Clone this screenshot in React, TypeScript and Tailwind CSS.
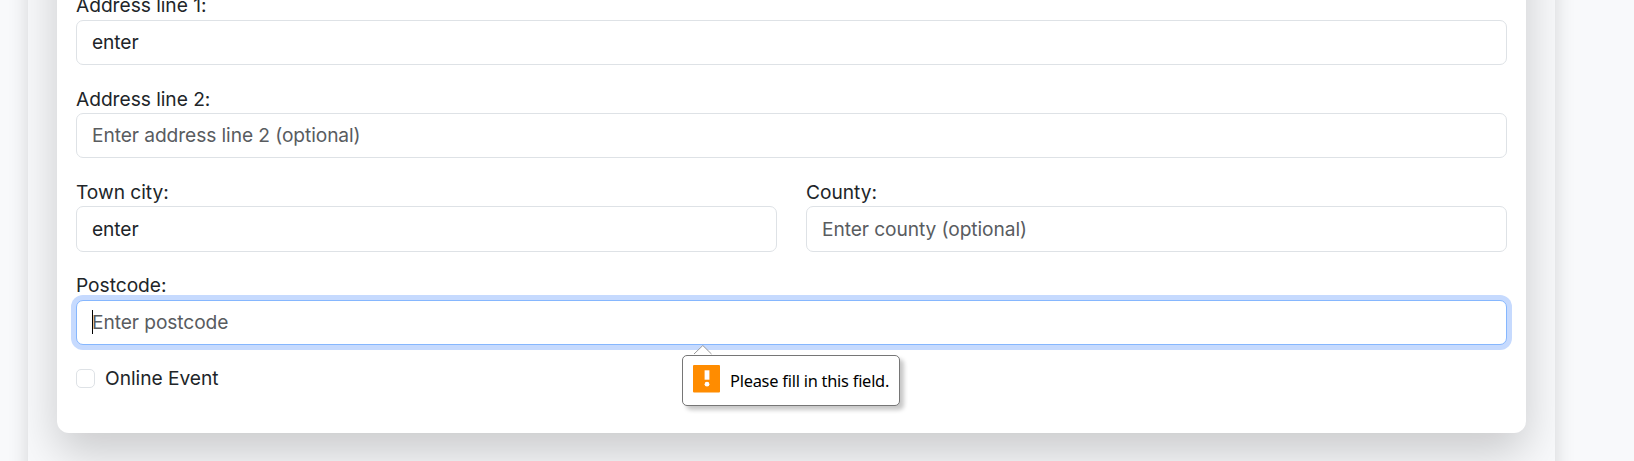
import type { ReactNode } from "react";

const inputBase =
  "block h-[45.2px] w-full rounded-[7px] border bg-white px-[15px] pb-[0.85px] text-[19.2px] leading-[28.8px] tracking-[-0.09px] text-[#212529] outline-none placeholder:text-[#595c5f] placeholder:opacity-100";

type FieldProps = {
  id: string;
  label: string;
  value?: string;
  placeholder?: string;
  focused?: boolean;
  children?: ReactNode;
};

function Field({ id, label, value, placeholder, focused, children }: FieldProps) {
  return (
    <div className="relative mb-[19.2px]">
      <label htmlFor={id} className="block h-[28.8px] pt-[0.15px] leading-[28.8px]">
        {label}
      </label>
      <input
        id={id}
        defaultValue={value}
        placeholder={placeholder}
        className={`${inputBase} ${
          focused
            ? "border-[#86b7fe] shadow-[0_0_0_5px_#c6dafe]"
            : "border-[#dee2e6]"
        }`}
      />
      {children}
    </div>
  );
}

function ValidationBubble() {
  return (
    <div className="absolute left-[606px] top-[84px] z-10 w-[218px]">
      <div className="flex h-[51px] items-start rounded-[5px] border border-[#767676] bg-white pl-[10px] pt-[9px] shadow-[4px_4px_4px_rgba(0,0,0,0.22)]">
        <svg className="h-[28px] w-[27px] shrink-0" viewBox="0 0 27 28">
          <rect width="27" height="27.5" rx="1" fill="#ff8c00" />
          <path d="M11.6 5.3h4.8v9.4h-4.8z" fill="#fff" />
          <circle cx="14" cy="19.2" r="2.4" fill="#fff" />
        </svg>
        <span className="ml-[10px] mt-[4px] whitespace-nowrap font-['Noto_Sans',sans-serif] text-[16.4px] leading-[24px] tracking-[-0.24px] text-black">
          Please fill in this field.
        </span>
      </div>
      <svg className="absolute left-[11px] top-[-10px] h-[10px] w-[20px]" viewBox="0 0 20 10">
        <path d="M1 9 9.8.5 18.5 9v1H1z" fill="#fff" />
        <path d="M1 9 9.8.5 18.5 9" fill="none" stroke="#999" />
      </svg>
    </div>
  );
}

export default function App() {
  return (
    <div className="h-[461px] overflow-hidden bg-[#f8f9fb] pl-[28px] pr-[79px] font-['Inter',sans-serif] text-[19.2px] leading-[28.8px] tracking-[-0.04px] text-[#212529]">
      <div className="-mt-[100px] h-[700px] overflow-hidden bg-[#f8f9fb] px-[29px] shadow-[0_9.6px_19.2px_rgba(0,0,0,0.15)]">
        <div className="-mt-[100px] h-[633px] rounded-[12px] bg-white px-[19px] pt-[191.3px] shadow-[0_19.2px_45px_rgba(0,0,0,0.19)]">
          <Field id="line1" label="Address line 1:" value="enter" />
          <Field id="line2" label="Address line 2:" placeholder="Enter address line 2 (optional)" />
          <div className="grid grid-cols-2 gap-[29px]">
            <Field id="town" label="Town city:" value="enter" />
            <Field id="county" label="County:" placeholder="Enter county (optional)" />
          </div>
          <Field id="postcode" label="Postcode:" placeholder="Enter postcode" focused>
            <span className="absolute left-[16px] top-[39px] h-[24px] w-px bg-black" />
            <ValidationBubble />
          </Field>
          <label className="flex h-[28.8px] items-center gap-[10px]">
            <input
              type="checkbox"
              className="size-[19px] appearance-none rounded-[5px] border border-[#dee2e6] bg-white"
            />
            Online Event
          </label>
        </div>
      </div>
    </div>
  );
}
